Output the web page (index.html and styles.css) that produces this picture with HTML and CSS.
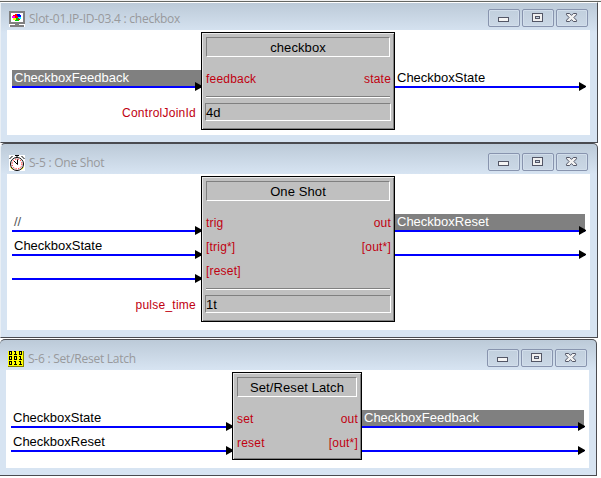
FILE: index.html
```html
<!DOCTYPE html>
<html lang="en">
<head>
<meta charset="utf-8">
<title>Logic symbols</title>
<link rel="stylesheet" href="styles.css">
</head>
<body>
<svg class="defs" width="0" height="0" aria-hidden="true">
  <defs>
    <g id="min" shape-rendering="crispEdges">
      <rect x="9" y="7" width="11" height="5" rx="1" fill="#535666"/>
      <rect x="10" y="8" width="9" height="3" fill="#f4f4f4"/>
    </g>
    <g id="max" shape-rendering="crispEdges">
      <rect x="9" y="3" width="11" height="9" fill="#535666"/>
      <rect x="10" y="4" width="9" height="7" fill="#f0f0f0"/>
      <rect x="12" y="6" width="5" height="3" fill="#535666"/>
      <rect x="13" y="7" width="3" height="1" fill="#c3d0df"/>
    </g>
    <g id="close">
      <path d="M9.500 3.500h3.200l1.800 1.900 1.800-1.900h3.200v1.300l-2.600 2.700 2.600 2.700v1.300h-3.200l-1.800-1.900-1.800 1.900h-3.200v-1.300l2.600-2.700-2.600-2.700z" fill="#f2f2f2" stroke="#535666"/>
    </g>
  </defs>
</svg>
<main class="workspace">

  <section class="window first">
    <header class="titlebar">
      <svg class="icon" width="16" height="16" viewBox="0 0 16 16" shape-rendering="crispEdges">
        <rect width="16" height="16" fill="#fff"/>
        <path d="M0 0h16v13H0z" fill="#808080"/>
        <path d="M2 2h12v9H2z" fill="#fff"/>
        <path d="M6 13h4v1h5v2H1v-2h5z" fill="#808080"/>
        <path d="M4 4h2v-1h3v2H7v1H4z" fill="#f00"/>
        <path d="M8 3h3v1h1v2H8z" fill="#00f"/>
        <path d="M3 5h3v2H3z" fill="#f0f"/>
        <path d="M6 5h3v2H6z" fill="#f00"/>
        <path d="M9 6h3v2H9z" fill="#0ff"/>
        <path d="M4 7h3v2H4z" fill="#ff0"/>
        <path d="M7 7h3v3H6v-1h1z" fill="#0c0"/>
        <path d="M9 8h2v1H9z" fill="#f00"/>
      </svg>
      <h2>Slot-01.IP-ID-03.4 : checkbox</h2>
      <div class="controls">
        <svg viewBox="0 0 30 16"><use href="#min"/></svg>
        <svg viewBox="0 0 30 16"><use href="#max"/></svg>
        <svg viewBox="0 0 30 16"><use href="#close"/></svg>
      </div>
    </header>
    <div class="client">
      <div class="side inputs">
        <div class="signal selected"><span>CheckboxFeedback</span></div>
        <div class="param">ControlJoinId</div>
      </div>
      <div class="block">
        <h3>checkbox</h3>
        <div class="ports">
          <div class="port"><span>feedback</span><span>state</span></div>
        </div>
        <div class="rule"></div>
        <div class="value">4d</div>
      </div>
      <div class="side outputs">
        <div class="signal"><span>CheckboxState</span></div>
      </div>
    </div>
  </section>

  <section class="window second">
    <header class="titlebar">
      <svg class="icon" width="16" height="16" viewBox="0 0 16 16">
        <rect width="16" height="16" fill="#fff"/>
        <path d="M6 .5h4M8 .5v2M.5 4l3-3M15.500 4l-3-3" stroke="#000" fill="none"/>
        <circle cx="8" cy="9" r="6.500" fill="#fff" stroke="#000"/>
        <circle cx="8" cy="9" r="4.900" fill="none" stroke="#f00" stroke-dasharray="1.200 1.370"/>
        <path d="M8.500 9.500V4.500M8.500 9.500L5 6" fill="none" stroke="#000"/>
        <path d="M1.500 12.500l2 2M14.500 12.500l-2 2" stroke="#e8d800"/>
      </svg>
      <h2>S-5 : One Shot</h2>
      <div class="controls">
        <svg viewBox="0 0 30 16"><use href="#min"/></svg>
        <svg viewBox="0 0 30 16"><use href="#max"/></svg>
        <svg viewBox="0 0 30 16"><use href="#close"/></svg>
      </div>
    </header>
    <div class="client">
      <div class="side inputs">
        <div class="signal comment"><span>//</span></div>
        <div class="signal"><span>CheckboxState</span></div>
        <div class="signal"></div>
        <div class="param">pulse_time</div>
      </div>
      <div class="block">
        <h3>One Shot</h3>
        <div class="ports">
          <div class="port"><span>trig</span><span>out</span></div>
          <div class="port"><span>[trig*]</span><span>[out*]</span></div>
          <div class="port"><span>[reset]</span></div>
        </div>
        <div class="rule"></div>
        <div class="value">1t</div>
      </div>
      <div class="side outputs">
        <div class="signal selected"><span>CheckboxReset</span></div>
        <div class="signal"></div>
      </div>
    </div>
  </section>

  <section class="window third">
    <header class="titlebar">
      <svg class="icon" width="16" height="16" viewBox="0 0 16 16" shape-rendering="crispEdges">
        <rect width="16" height="16" fill="#808000"/>
        <rect width="15" height="15" fill="#ff0"/>
        <g fill="none" stroke="#000">
          <path d="M1.500 .5h2v3h-2zM6 .5h1.500v3M6 3.500h3M11.500 .5h2v3h-2z"/>
          <path d="M1.500 5.500h2v3h-2zM6.500 5.500h2v3h-2zM11 5.500h1.500v3M11 8.500h3"/>
          <path d="M1.500 10.500h2v3h-2zM6 10.500h1.500v3M6 13.500h3M11 10.500h1.500v3M11 13.500h3"/>
        </g>
      </svg>
      <h2>S-6 : Set/Reset Latch</h2>
      <div class="controls">
        <svg viewBox="0 0 30 16"><use href="#min"/></svg>
        <svg viewBox="0 0 30 16"><use href="#max"/></svg>
        <svg viewBox="0 0 30 16"><use href="#close"/></svg>
      </div>
    </header>
    <div class="client">
      <div class="side inputs">
        <div class="signal"><span>CheckboxState</span></div>
        <div class="signal"><span>CheckboxReset</span></div>
      </div>
      <div class="block narrow">
        <h3>Set/Reset Latch</h3>
        <div class="ports">
          <div class="port"><span>set</span><span>out</span></div>
          <div class="port"><span>reset</span><span>[out*]</span></div>
        </div>
      </div>
      <div class="side outputs">
        <div class="signal selected"><span>CheckboxFeedback</span></div>
        <div class="signal"></div>
      </div>
    </div>
  </section>

</main>
</body>
</html>
```

FILE: styles.css
```css
* {
  box-sizing: border-box;
}

body {
  margin: 0;
  background: #fff;
  font: 13px/16px "Liberation Sans", Arial, sans-serif;
  color: #000;
  overflow: hidden;
}

.defs {
  display: block;
  height: 0;
}

.workspace {
  display: flex;
  flex-direction: column;
  align-items: flex-start;
  height: 478px;
  border-top: 1px solid #f0f0f0;
}

.workspace::before {
  content: "";
  width: 100%;
  height: 1px;
  background: #656763;
}

.window {
  width: 598px;
  padding: 0 6px 6px;
  border: 1px solid #4a4b50;
  border-left-color: #e9eff5;
  background: linear-gradient(#bccad8, #d7e4f2 30px) #d7e4f2;
}

.window.first {
  height: 141px;
  border-top-color: #fff;
}

.window.second {
  height: 195px;
  border-radius: 5px 5px 0 0;
}

.window.third {
  width: 597px;
  height: 137px;
  margin-top: 1px;
  border-left: 0;
  border-radius: 5px 5px 0 0;
}

.titlebar {
  display: flex;
  align-items: center;
  height: 30px;
  padding: 7px 3px 0 2px;
}

.first .titlebar {
  height: 27px;
  padding-top: 4px;
}

.titlebar h2 {
  margin: 0 0 0 4px;
  font: 12px/16px "Open Sans", "Segoe UI", sans-serif;
  letter-spacing: -0.24px;
  color: #98999c;
}

.controls {
  display: flex;
  gap: 2px;
  margin-left: auto;
  margin-top: -1px;
}

.controls svg {
  width: 32px;
  height: 18px;
  border: 1px solid #8894ae;
  border-radius: 2px;
  background: linear-gradient(#c1cfdd, #cbd8e6);
  box-shadow: inset 0 0 0 1px #d2deeb;
}

.client {
  display: flex;
  align-items: flex-start;
  width: 583px;
  padding: 2px 4px 0 5px;
  background: #fff;
}

.first .client {
  height: 105px;
}

.second .client {
  height: 156px;
}

.third .client {
  height: 98px;
}

.side {
  padding-top: 38px;
}

.inputs {
  width: 189px;
}

.third .inputs {
  width: 221px;
}

.outputs {
  flex: 1;
}

.signal {
  position: relative;
  height: 18px;
  margin-bottom: 6px;
  padding-left: 2px;
  border-bottom: 2px solid #00f;
  white-space: nowrap;
}

.outputs .signal {
  margin-right: 1px;
}

.signal.selected {
  background: #808080;
  color: #fff;
}

.signal.comment {
  color: #555;
}

.signal::after {
  content: "";
  position: absolute;
  right: -1px;
  bottom: -5px;
  width: 7px;
  height: 9px;
  background: #000;
  clip-path: polygon(0 0, 100% 45%, 100% 55%, 0 100%);
}

.inputs .signal::after {
  right: 0;
  width: 6px;
  clip-path: polygon(0 0, 100% 35%, 100% 65%, 0 100%);
}

.param {
  margin-top: 17px;
  padding-right: 5px;
  text-align: right;
  font-size: 12px;
  letter-spacing: 0.25px;
  color: #c00010;
}

.block {
  width: 194px;
  padding: 3px;
  border: 1px solid #000;
  background: #c0c0c0;
  box-shadow: inset 1px 1px #e8e8e8, inset -1px -1px #808080;
}

.block.narrow {
  width: 130px;
  height: 88px;
}

.block h3 {
  height: 20px;
  margin: 1px;
  border: 1px solid;
  border-color: #808080 #fff #fff #808080;
  font: 13px/19px "Liberation Sans", Arial, sans-serif;
  letter-spacing: 0.1px;
  text-align: center;
}

.ports {
  padding: 12px 0 0 1px;
}

.port {
  display: flex;
  justify-content: space-between;
  height: 24px;
  padding-top: 1px;
  font-size: 12px;
  letter-spacing: 0.2px;
  color: #c00010;
}

.rule {
  height: 2px;
  margin: 2px 1px 5px;
  border-top: 1px solid #808080;
  border-bottom: 1px solid #fff;
}

.value {
  height: 18px;
  margin-bottom: 5px;
  border: 1px solid;
  border-color: #808080 #fff #fff #808080;
  line-height: 17px;
}
```
